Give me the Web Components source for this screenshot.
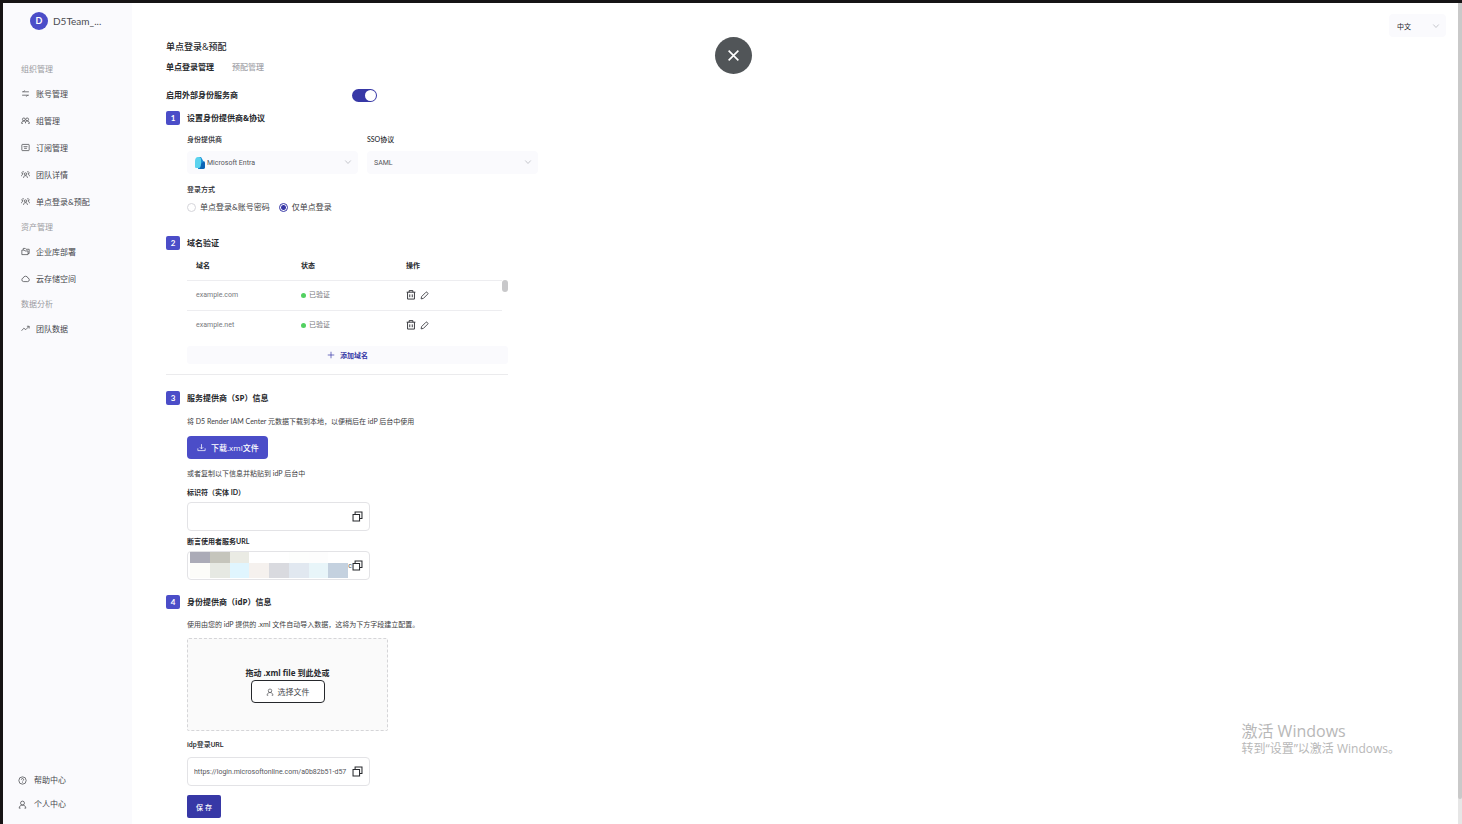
<!DOCTYPE html>
<html lang="zh-CN">
<head>
<meta charset="utf-8">
<title>单点登录&amp;预配</title>
<style>
	:root {
		--color-primary: #4b4dc8;
		--color-primary-dark: #3738a6;
		--color-surface: #fafafd;
		--color-text: #26282c;
		--color-muted: #9a9ba1;
		--color-line: #e3e3e6;
		--size-small: 7px;
		--size-base: 8px;
		--size-title: 9px;
		--font-strong: "Open Sans", "Noto Sans CJK SC", sans-serif;
		--font-field: Roboto, "Noto Sans CJK SC", sans-serif;
	}
	html, body { height: 100%; }
	body {
		margin: 0;
		overflow: hidden;
		background: #fff;
		color: var(--color-text);
		font: 8px/14px Lato, "Noto Sans CJK SC", sans-serif;
	}
</style>
</head>
<body>

<sso-shell>
	<sso-sidebar slot="side">
		<nav-group label="组织管理">
			<nav-item icon="sliders">账号管理</nav-item>
			<nav-item icon="users">组管理</nav-item>
			<nav-item icon="card">订阅管理</nav-item>
			<nav-item icon="team">团队详情</nav-item>
			<nav-item icon="team">单点登录&amp;预配</nav-item>
		</nav-group>
		<nav-group label="资产管理">
			<nav-item icon="folder">企业库部署</nav-item>
			<nav-item icon="cloud">云存储空间</nav-item>
		</nav-group>
		<nav-group label="数据分析">
			<nav-item icon="trend">团队数据</nav-item>
		</nav-group>
		<nav-item slot="foot" icon="help">帮助中心</nav-item>
		<nav-item slot="foot" icon="user">个人中心</nav-item>
	</sso-sidebar>

	<sso-header></sso-header>

	<step-section num="1" heading="设置身份提供商&amp;协议">
		<provider-form></provider-form>
	</step-section>
	<step-section num="2" heading="域名验证">
		<domain-table></domain-table>
	</step-section>
	<step-section num="3" heading="服务提供商（SP）信息">
		<sp-info></sp-info>
	</step-section>
	<step-section num="4" heading="身份提供商（idP）信息">
		<idp-info></idp-info>
	</step-section>

	<lang-select slot="over"></lang-select>
	<close-button slot="over"></close-button>
	<os-watermark slot="over"></os-watermark>
</sso-shell>

<script>
const ICONS = {
	sliders: '<path d="M2 5h12M2 11h12M4.500 5l2-2.500M11.500 11l-2 2.500"/>',
	users: '<circle cx="5" cy="6" r="2.500"/><circle cx="11" cy="6" r="2.500"/><path d="M3.500 13H1c0-2.500 1.500-4 4-4 1.400 0 2.400.6 3 1.500.6-.9 1.600-1.500 3-1.500 2.500 0 4 1.500 4 4h-2.500M8 10.500V13"/>',
	card: '<rect x="1.500" y="2.500" width="13" height="11" rx="1"/><path d="M4.500 6.500h7M5.500 9.500h5"/>',
	team: '<circle cx="8" cy="7" r="2"/><path d="M4.500 14c0-2.500 1.300-4 3.500-4s3.500 1.500 3.500 4M5 3.500A2 2 0 1 0 3.500 7M1 11c0-2 1-3.500 3-4M11 3.500A2 2 0 1 1 12.500 7M15 11c0-2-1-3.500-3-4"/>',
	folder: '<path d="M1.500 13.500v-8h4l1.500 1.500h5.500v6.500zM4 5V2.500h3.500L9 4h5.500v7.500h-2"/>',
	cloud: '<path d="M4.500 13.500a3.300 3.300 0 0 1-.5-6.500 4.300 4.300 0 0 1 8.300.2 3.200 3.200 0 0 1-.3 6.300z"/>',
	trend: '<path d="M1 12l4-4.500 3.500 2.500L14 4.500M10.500 4H14.500v4"/>',
	help: '<circle cx="8" cy="8" r="6.500"/><path d="M6 6.500a2 2 0 1 1 2.800 1.800c-.6.3-.8.600-.8 1.200M8 11v1.200"/>',
	user: '<circle cx="8" cy="5.500" r="3.500"/><path d="M4.500 14.500H2c.5-3.500 2.500-5.500 6-5.500s5.500 2 6 5.500h-2.500"/>',
	down: '<path d="M2.500 5l5.500 6 5.500-6"/>',
	trash: '<path d="M1 3.500h14M5 3.500V1h6v2.500M2.500 3.500v11h11v-11M6 7v4.500M10 7v4.500"/>',
	pencil: '<path d="M2 14l.8-4L10.500 2.300a1.500 1.500 0 0 1 2.100 0l1.100 1.100a1.500 1.500 0 0 1 0 2.100L6 13.200z"/>',
	plus: '<path d="M8 1.500v13M1.500 8h13"/>',
	download: '<path d="M8 2v8M5 7.500l3 3 3-3M1.500 9.500v4h13v-4"/>',
	copy: '<path d="M1.500 5h9.500v9.500H1.500zM4.500 5V1.500h10v9.500H11"/>',
	close: '<path d="M2 2l12 12M14 2L2 14"/>'
};

function icon(name, size = 9, stroke = 1.3) {
	return `<svg width="${size}" height="${size}" viewBox="0 0 16 16" fill="none" stroke="currentColor" stroke-width="${stroke}" aria-hidden="true">${ICONS[name]}</svg>`;
}

const BASE = `
	:host { display: block; }
	:host([hidden]) { display: none; }
	* { box-sizing: border-box; }
	svg { display: block; flex: none; }
	button, input, select { font: inherit; color: inherit; margin: 0; }
	button { border: 0; background: none; padding: 0; cursor: pointer; }
	p, h1, h2, ul { margin: 0; padding: 0; font-size: inherit; }
`;

class BaseElement extends HTMLElement {
	constructor() {
		super();
		this.attachShadow({ mode: 'open' });
	}
	connectedCallback() {
		this.shadowRoot.innerHTML = `<style>${BASE}${this.styles()}</style>${this.markup()}`;
	}
	styles() { return ''; }
	markup() { return '<slot></slot>'; }
}

class SsoShell extends BaseElement {
	styles() {
		return `
			:host { display: flex; height: 100vh; border: solid #161415; border-width: 3px 0 0 3px; box-sizing: border-box; position: relative; }
			main { flex: 1; min-width: 0; overflow: hidden; padding: 36px 34px 0; }
			.scroll { flex: none; width: 4px; background: #e6e6e6; }
			.thumb { height: 97%; background: #c9c9c9; border-radius: 0 0 2px 2px; }
		`;
	}
	markup() {
		return `
			<slot name="side"></slot>
			<main><slot></slot></main>
			<div class="scroll"><div class="thumb"></div></div>
			<slot name="over"></slot>
		`;
	}
}

class SsoSidebar extends BaseElement {
	styles() {
		return `
			:host { display: flex; flex-direction: column; flex: none; width: 129px; background: var(--color-surface); }
			.team { display: flex; align-items: center; gap: 5px; height: 36px; padding-left: 27px; font-size: 10px; color: #4a4b50; }
			.avatar { width: 18px; height: 18px; border-radius: 50%; background: var(--color-primary); color: #fff; font: bold 9px/18px Lato, sans-serif; text-align: center; }
			nav { display: flex; flex-direction: column; gap: 1px; flex: 1; padding: 19px 0 0 18px; }
			.foot { padding: 0 0 8px 15px; --item-height: 24px; --item-gap: 7px; }
		`;
	}
	markup() {
		return `
			<div class="team"><span class="avatar">D</span><span>D5Team_...</span></div>
			<nav><slot></slot></nav>
			<div class="foot"><slot name="foot"></slot></div>
		`;
	}
}

class NavGroup extends BaseElement {
	styles() {
		return `.label { line-height: 22px; color: var(--color-muted); }`;
	}
	markup() {
		return `<div class="label">${this.getAttribute('label')}</div><slot></slot>`;
	}
}

class NavItem extends BaseElement {
	styles() {
		return `
			a { display: flex; align-items: center; gap: var(--item-gap, 6px); height: var(--item-height, 27px); color: #46474c; text-decoration: none; }
		`;
	}
	markup() {
		return `<a href="#">${icon(this.getAttribute('icon'))}<slot></slot></a>`;
	}
}

class SsoHeader extends BaseElement {
	styles() {
		return `
			h1 { font-family: var(--font-strong); font-size: var(--size-title); font-weight: 500; line-height: 16px; }
			.tabs { display: flex; gap: 18px; margin-top: 5px; }
			.tabs button { line-height: 14px; color: #a3a4aa; font-weight: 500; }
			.tabs button[aria-selected=true] { color: var(--color-text); font-weight: bold; }
			.enable { display: flex; justify-content: space-between; align-items: center; width: 211px; margin-top: 14px; font-weight: bold; }
			.enable input { appearance: none; width: 25px; height: 13px; border-radius: 7px; background: var(--color-primary-dark); padding: 1px; display: flex; justify-content: flex-end; }
			.enable input::before { content: ""; width: 11px; height: 11px; border-radius: 50%; background: #fff; }
		`;
	}
	markup() {
		return `
			<h1>单点登录&amp;预配</h1>
			<div class="tabs" role="tablist">
				<button role="tab" aria-selected="true">单点登录管理</button>
				<button role="tab" aria-selected="false">预配管理</button>
			</div>
			<div class="enable">
				<label for="enable">启用外部身份服务商</label>
				<input id="enable" type="checkbox" role="switch" checked>
			</div>
		`;
	}
}

class StepSection extends BaseElement {
	styles() {
		return `
			:host { padding-top: 9px; }
			:host(:not([num="1"])) { padding-top: 15px; }
			header { display: flex; align-items: center; gap: 7px; }
			.num { width: 14px; height: 14px; border-radius: 2px; background: var(--color-primary); color: #fff; font-weight: bold; text-align: center; }
			h2 { font-family: var(--font-strong); font-size: var(--size-base); font-weight: bold; }
			.body { padding-left: 21px; }
		`;
	}
	markup() {
		return `
			<header><span class="num">${this.getAttribute('num')}</span><h2>${this.getAttribute('heading').replace('&', '&amp;')}</h2></header>
			<div class="body"><slot></slot></div>
		`;
	}
}

class ProviderForm extends BaseElement {
	styles() {
		return `
			:host { padding: 7px 0; }
			.row { display: flex; gap: 9px; }
			.field { width: 171px; font-size: var(--size-small); }
			.field label, .method { font-size: var(--size-small); line-height: 14px; font-weight: 500; }
			.box { position: relative; margin-top: 5px; }
			select { appearance: none; display: block; width: 100%; height: 23px; border: 0; border-radius: 4px; padding: 0 20px 0 7px; background: var(--color-surface); color: #55565b; font-family: var(--font-field); }
			.box.logo select { padding-left: 20px; }
			.box svg { position: absolute; top: 7px; right: 6px; color: #b9bac0; pointer-events: none; }
			.box svg.entra { top: 6px; left: 8px; right: auto; }
			.method { margin-top: 8px; }
			.radios { display: flex; gap: 9px; margin-top: 4px; }
			.radios label { display: flex; align-items: center; gap: 4px; color: #3c3d42; }
			input { appearance: none; width: 9px; height: 9px; border: 1px solid #d5d5da; border-radius: 50%; background: #fff; }
			input:checked { border-color: var(--color-primary-dark); background: radial-gradient(var(--color-primary-dark) 2px, #fff 3px); }
		`;
	}
	markup() {
		return `
			<div class="row">
				<div class="field">
					<label for="idp">身份提供商</label>
					<div class="box logo">
						<svg class="entra" width="10" height="12" viewBox="0 0 10 12">
							<path d="M3 0h3l4 7v3c0 1-1 2-2 2H3z" fill="#1b8fd6"/>
							<path d="M3 0c3 0 3 1 3 3v5c0 2-1 3-3 3H1c-1 0-1-1-1-2V4c0-2 1-4 3-4z" fill="#5cd3ee"/>
							<path d="M6 7l3-3c1 1 1 2 1 3v3c0 1-1 2-2 2H3c2 0 3-2 3-5z" fill="#0b63b5"/>
						</svg>
						<select id="idp"><option>Microsoft Entra</option></select>
						${icon('down', 8, 1.6)}
					</div>
				</div>
				<div class="field">
					<label for="proto">SSO协议</label>
					<div class="box">
						<select id="proto"><option>SAML</option></select>
						${icon('down', 8, 1.6)}
					</div>
				</div>
			</div>
			<div class="method" id="method">登录方式</div>
			<div class="radios" role="radiogroup" aria-labelledby="method">
				<label><input type="radio" name="m">单点登录&amp;账号密码</label>
				<label><input type="radio" name="m" checked>仅单点登录</label>
			</div>
		`;
	}
}

class DomainTable extends BaseElement {
	styles() {
		return `
			:host { width: 321px; padding-bottom: 1px; font-size: var(--size-small); }
			.wrap { display: flex; }
			table { flex: 1; width: 100%; border-collapse: collapse; table-layout: fixed; }
			th, td { height: 30px; padding: 0 0 0 9px; text-align: left; border-bottom: 1px solid #ededf0; }
			th { font-weight: bold; }
			td { color: #77787d; font-family: var(--font-field); }
			tbody tr:last-child td { border-bottom: 0; }
			.dot { display: inline-block; width: 5px; height: 5px; border-radius: 50%; background: #52d060; margin-right: 3px; vertical-align: middle; }
			.ops { display: flex; align-items: center; gap: 4px; color: #303136; }
			.bar { flex: none; width: 6px; padding-top: 30px; }
			.bar i { display: block; height: 12px; border-radius: 3px; background: #c8c8ca; }
			.add { display: flex; align-items: center; justify-content: center; gap: 5px; width: 100%; height: 18px; margin-top: 6px; border-radius: 3px; background: var(--color-surface); color: var(--color-primary-dark); font-weight: bold; }
			hr { margin: 10px 0 0 -21px; border: 0; border-top: 1px solid #ebebed; }
		`;
	}
	row(domain) {
		return `
			<tr>
				<td>${domain}</td>
				<td><span class="dot"></span>已验证</td>
				<td><div class="ops">
					<button aria-label="删除">${icon('trash', 10, 1.5)}</button>
					<button aria-label="编辑">${icon('pencil', 9, 1.5)}</button>
				</div></td>
			</tr>`;
	}
	markup() {
		return `
			<div class="wrap">
				<table>
					<thead><tr><th>域名</th><th>状态</th><th>操作</th></tr></thead>
					<tbody>${this.row('example.com')}${this.row('example.net')}</tbody>
				</table>
				<div class="bar"><i></i></div>
			</div>
			<button class="add">${icon('plus', 8, 1.4)}添加域名</button>
			<hr>
		`;
	}
}

class CopyField extends BaseElement {
	styles() {
		return `
			:host { width: 183px; font-size: var(--size-small); }
			label { display: block; line-height: 14px; font-weight: bold; }
			:host([light]) label { font-family: var(--font-field); font-weight: 500; }
			.box { display: flex; align-items: center; height: 29px; margin-top: var(--field-gap, 3px); padding-right: 6px; border: 1px solid var(--color-line); border-radius: 4px; background: #fff; position: relative; }
			input { flex: 1; min-width: 0; height: 100%; border: 0; outline: 0; padding: 0 0 0 6px; background: none; color: #55565b; font-family: var(--font-field); }
			:host([masked]) input { text-align: right; }
			.mask { position: absolute; left: 2px; top: 0; width: 158px; height: 27px; display: grid; grid-template-columns: repeat(8, 1fr); grid-template-rows: 11px 15px; }
		`;
	}
	markup() {
		const colors = ['#ababb7', '#c5c5bc', '#eaebe4', '#fff', '#fff', '#fdfefd', '#fdfdfd', '#fff',
			'#fcfcf9', '#e6e9e3', '#e0f5fe', '#f5f1ee', '#d9dadf', '#e1e8f0', '#e8f5f9', '#c4d1df'];
		const mask = this.hasAttribute('masked')
			? `<div class="mask">${colors.map(c => `<i style="background:${c}"></i>`).join('')}</div>` : '';
		return `
			<label for="value">${this.getAttribute('label')}</label>
			<div class="box">
				<input id="value" type="text" readonly value="${this.getAttribute('value') || ''}">
				${mask}
				<button aria-label="复制">${icon('copy', 11, 1.5)}</button>
			</div>
		`;
	}
}

class SpInfo extends BaseElement {
	styles() {
		return `
			:host { padding-top: 9px; }
			p { font-size: var(--size-small); line-height: 14px; color: #3c3d42; }
			.download { display: flex; align-items: center; gap: 5px; height: 23px; margin: 8px 0 7px; padding: 0 9px 0 10px; border-radius: 4px; background: var(--color-primary); color: #fff; font-family: var(--font-strong); font-weight: 500; }
			copy-field { margin-top: 5px; }
			copy-field + copy-field { margin-top: 3px; }
		`;
	}
	markup() {
		return `
			<p>将 D5 Render IAM Center 元数据下载到本地，以便稍后在 idP 后台中使用</p>
			<button class="download">${icon('download', 9)}下载.xml文件</button>
			<p>或者复制以下信息并粘贴到 idP 后台中</p>
			<copy-field label="标识符（实体 ID）"></copy-field>
			<copy-field label="断言使用者服务URL" masked value="c"></copy-field>
		`;
	}
}

class IdpInfo extends BaseElement {
	styles() {
		return `
			:host { padding-top: 8px; }
			p { font-size: var(--size-small); line-height: 14px; color: #3c3d42; }
			.drop { display: flex; flex-direction: column; align-items: center; justify-content: center; width: 201px; height: 93px; margin: 7px 0; border: 1px dashed #d5d5d8; border-radius: 2px; background: #fafafa; }
			.drop strong { font-family: var(--font-strong); line-height: 14px; }
			.pick { display: flex; align-items: center; gap: 4px; height: 23px; padding: 0 14px; border: 1px solid #26282c; border-radius: 4px; background: #fff; color: #46474c; }
			copy-field { --field-gap: 5px; }
			.save { width: 34px; height: 23px; margin-top: 9px; border-radius: 2px; background: var(--color-primary-dark); color: #fff; font-size: var(--size-small); font-weight: 500; }
		`;
	}
	markup() {
		return `
			<p>使用由您的 idP 提供的 .xml 文件自动导入数据，这将为下方字段建立配置。</p>
			<div class="drop">
				<strong>拖动 .xml file 到此处或</strong>
				<button class="pick">${icon('user', 8)}选择文件</button>
			</div>
			<copy-field light label="idp登录URL" value="https://login.microsoftonline.com/a0b82b51-d57"></copy-field>
			<button class="save">保 存</button>
		`;
	}
}

class LangSelect extends BaseElement {
	styles() {
		return `
			:host { position: absolute; top: 11px; right: 16px; width: 57px; font-size: var(--size-small); }
			select { appearance: none; width: 100%; height: 23px; border: 0; border-radius: 4px; padding: 0 0 0 8px; background: var(--color-surface); }
			svg { position: absolute; top: 8px; right: 6px; color: #b9bac0; pointer-events: none; }
		`;
	}
	markup() {
		return `<select aria-label="语言"><option>中文</option></select>${icon('down', 8, 1.6)}`;
	}
}

class CloseButton extends BaseElement {
	styles() {
		return `
			:host { position: absolute; top: 34px; left: 50%; margin-left: -18px; }
			button { display: grid; place-items: center; width: 37px; height: 37px; border-radius: 50%; background: #515558; color: #fff; }
		`;
	}
	markup() {
		return `<button aria-label="关闭">${icon('close', 13, 2)}</button>`;
	}
}

class OsWatermark extends BaseElement {
	styles() {
		return `
			:host { position: absolute; right: 62px; bottom: 67px; color: #b8b8b8; font: 12px/16px "Open Sans", "Noto Sans CJK SC", sans-serif; pointer-events: none; }
			.big { font-size: 16px; line-height: 20px; }
		`;
	}
	markup() {
		return `<div class="big">激活 Windows</div><div>转到“设置”以激活 Windows。</div>`;
	}
}

customElements.define('sso-shell', SsoShell);
customElements.define('sso-sidebar', SsoSidebar);
customElements.define('nav-group', NavGroup);
customElements.define('nav-item', NavItem);
customElements.define('sso-header', SsoHeader);
customElements.define('step-section', StepSection);
customElements.define('provider-form', ProviderForm);
customElements.define('domain-table', DomainTable);
customElements.define('copy-field', CopyField);
customElements.define('sp-info', SpInfo);
customElements.define('idp-info', IdpInfo);
customElements.define('lang-select', LangSelect);
customElements.define('close-button', CloseButton);
customElements.define('os-watermark', OsWatermark);
</script>
</body>
</html>
